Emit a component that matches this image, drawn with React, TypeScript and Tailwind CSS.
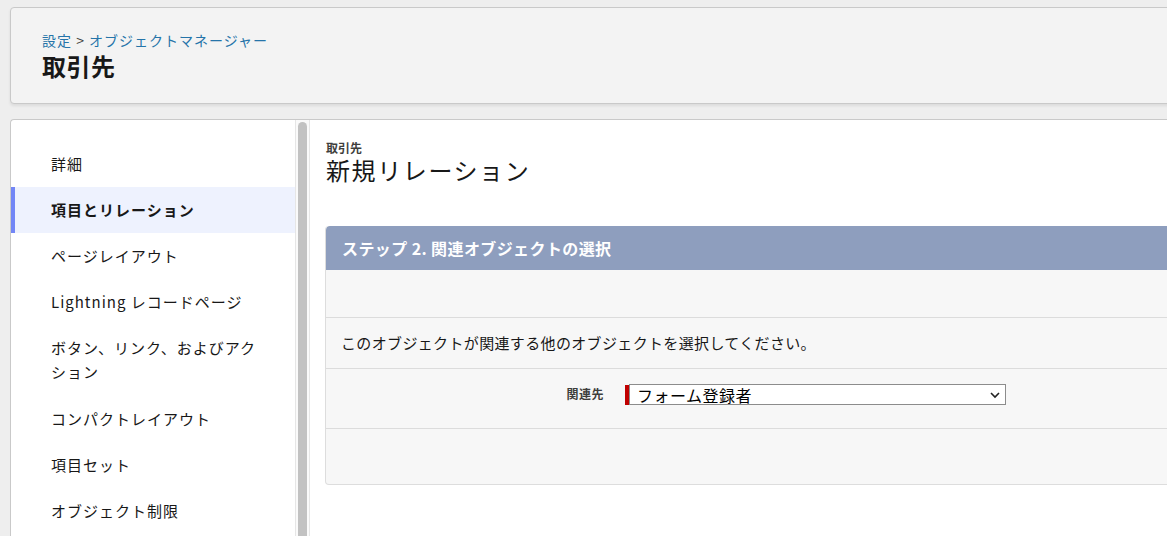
import React from 'react';

const navItems = [
  '詳細',
  '項目とリレーション',
  'ページレイアウト',
  'Lightning レコードページ',
  'ボタン、リンク、およびアクション',
  'コンパクトレイアウト',
  '項目セット',
  'オブジェクト制限',
];

const font = { fontFamily: '"Noto Sans CJK JP", "Noto Sans", sans-serif' };

export default function App() {
  return (
    <div className="w-screen h-screen overflow-hidden bg-[#eeeeee]" style={font}>
      <div className="w-[1220px] pl-[10px] pt-[7px]">
        <div className="h-[97px] bg-[#f3f3f3] border border-[#c9c9c9] rounded-[4px] shadow-[0_2px_3px_rgba(0,0,0,0.08)] pl-[31px] pt-[22px]">
          <div className="text-[14px] leading-[20px] tracking-[1px] text-[#2574a9]">
            設定 <span className="text-[#3e3e3c]">&gt;</span> オブジェクトマネージャー
          </div>
          <div className="text-[24px] leading-[32px] font-bold tracking-[0.5px] text-[#181818]">取引先</div>
        </div>

        <div className="mt-[15px] h-[440px] bg-white border-l border-t border-[#c9c9c9] rounded-tl-[4px] flex">
          <div className="w-[284px] shrink-0 pt-[21px]">
            {navItems.map((item, i) => (
              <div
                key={item}
                className={
                  'pl-[40px] pr-[30px] py-[11px] text-[15px] leading-[24px] tracking-[1px] text-[#181818] ' +
                  (i === 1 ? 'bg-[#eef2fe] font-bold shadow-[inset_4px_0_0_#7286f6]' : '') +
                  (i === 4 ? ' pb-[12px]' : '')
                }
              >
                {item}
              </div>
            ))}
          </div>

          <div className="w-[15px] shrink-0 bg-[#fafafa] border-l border-r border-[#e6e6e6] flex justify-center pt-[2px]">
            <div className="w-[9px] h-full bg-[#c2c2c2] rounded-t-full" />
          </div>

          <div className="flex-1 pl-[15px] pt-[19px]">
            <div className="text-[12px] leading-[18px] font-bold text-[#3e3e3c] pl-[1px]">取引先</div>
            <div className="text-[24px] leading-[26px] tracking-[1.6px] text-[#181818] pl-[1px]">新規リレーション</div>

            <div className="mt-[43px] border border-[#dddddd] border-t-0 rounded-[4px] bg-[#f7f7f7] overflow-hidden">
              <div className="h-[44px] bg-[#8e9ebe] flex items-center pl-[16px] text-[16px] font-bold tracking-[0.4px] text-white rounded-t-[4px]">
                ステップ 2. 関連オブジェクトの選択
              </div>
              <div className="h-[48px] border-b border-[#dcdcdc]" />
              <div className="h-[51px] border-b border-[#dcdcdc] flex items-center pl-[15px] text-[15px] tracking-[0.35px] text-[#181818]">
                このオブジェクトが関連する他のオブジェクトを選択してください。
              </div>
              <div className="h-[60px] border-b border-[#dcdcdc] flex items-start pt-[15px]">
                <div className="w-[299px] text-right text-[12px] leading-[20px] font-bold tracking-[0.5px] text-[#3e3e3c] pr-[21px] shrink-0">
                  関連先
                </div>
                <div className="flex items-stretch h-[21px]">
                  <div className="w-[4px] bg-[#c00000] mt-[1px]" />
                  <div className="w-[377px] border border-[#8c8c8c] bg-white flex items-center justify-between pl-[7px] pr-[4px]">
                    <span className="text-[16px] leading-[18px] tracking-[0.5px] text-black">フォーム登録者</span>
                    <svg width="12" height="12" viewBox="0 0 12 12" fill="none">
                      <path d="M2 4l4 4 4-4" stroke="#222" strokeWidth="1.6" />
                    </svg>
                  </div>
                </div>
              </div>
              <div className="h-[55px]" />
            </div>
          </div>
        </div>
      </div>
    </div>
  );
}
